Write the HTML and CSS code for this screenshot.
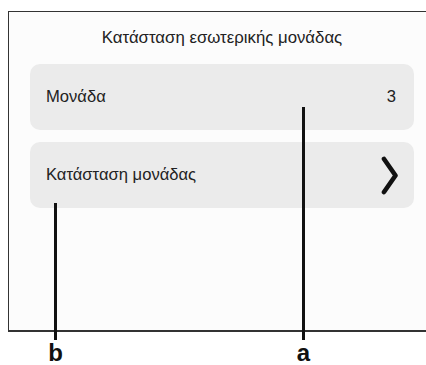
FILE: index.html
```html
<!DOCTYPE html>
<html lang="el">
<head>
<meta charset="utf-8">
<title>Κατάσταση εσωτερικής μονάδας</title>
<link rel="stylesheet" href="styles.css">
</head>
<body>
<div class="screen">
  <div class="title">Κατάσταση εσωτερικής μονάδας</div>
  <div class="list">
    <div class="row">
      <span class="label">Μονάδα</span>
      <span class="value">3</span>
    </div>
    <div class="row">
      <span class="label">Κατάσταση μονάδας</span>
      <svg class="chev" width="17" height="39" viewBox="0 0 17 39"><path d="M3 3 L14.5 19.5 L3 36" fill="none" stroke="#111" stroke-width="4.6" stroke-linecap="round" stroke-linejoin="round"/></svg>
    </div>
  </div>
</div>
<div class="callout callout-a"><span class="callout-text">a</span></div>
<div class="callout callout-b"><span class="callout-text">b</span></div>
</body>
</html>
```
FILE: styles.css
```css
html, body {
  margin: 0;
  padding: 0;
  overflow: hidden;
  background: #ffffff;
}
body {
  position: relative;
  width: 426px;
  height: 365px;
  font-family: "Liberation Sans", Arial, sans-serif;
  color: #222;
}
.screen {
  box-sizing: border-box;
  margin: 11px 0 0 8px;
  width: 418px;
  height: 321px;
  border-top: 1px solid #333;
  border-left: 1px solid #333;
  border-right: 0 none;
  border-bottom: 2px solid #333;
  background: #fcfcfc;
  padding: 0 12px 0 21px;
  display: flex;
  flex-direction: column;
}
.title {
  height: 52px;
  display: flex;
  align-items: center;
  justify-content: center;
  font-size: 16.8px;
  color: #222;
}
.list {
  display: flex;
  flex-direction: column;
  gap: 12px;
}
.row {
  height: 66px;
  border-radius: 10px;
  background: #ebebeb;
  display: flex;
  align-items: center;
  justify-content: space-between;
  padding: 0 18px 0 16px;
  font-size: 16.6px;
}
.chev {
  display: block;
  margin-right: -2px;
}
.callout {
  position: absolute;
  width: 3px;
  background: #111;
  bottom: 25px;
}
.callout-a {
  left: 302px;
  top: 107px;
}
.callout-b {
  left: 54px;
  top: 203px;
}
.callout-text {
  position: absolute;
  top: 100%;
  left: 50%;
  transform: translateX(-50%);
  font-weight: bold;
  font-size: 24px;
  line-height: 22px;
  color: #111;
  margin-top: 2px;
}
```
